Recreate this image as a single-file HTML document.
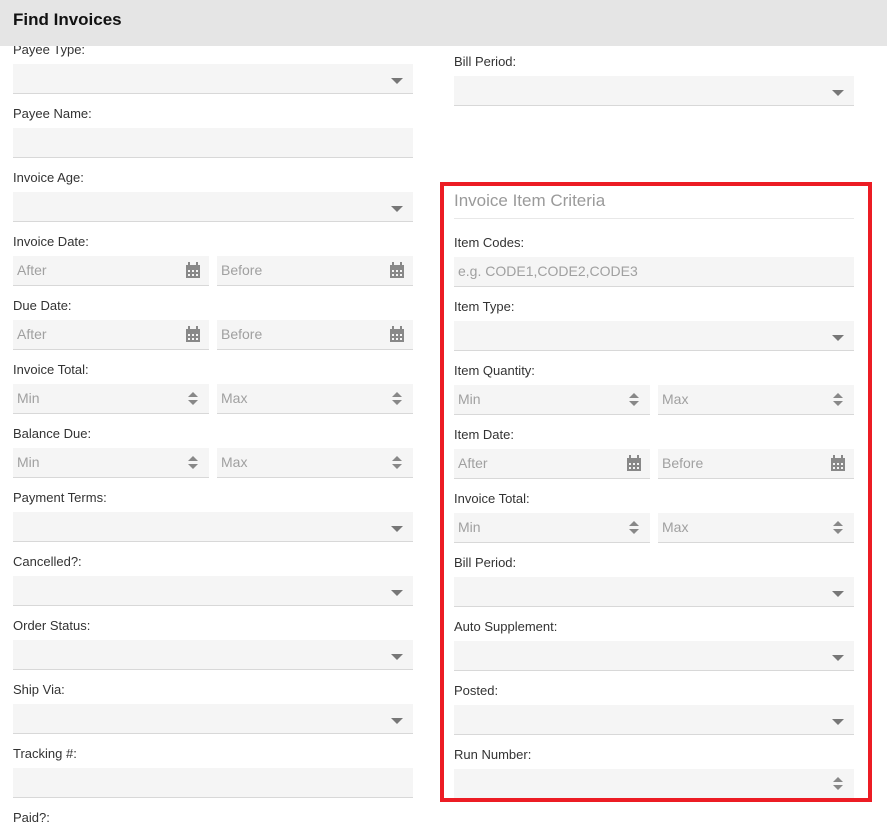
<!DOCTYPE html><html><head><meta charset="utf-8"><style>
*{margin:0;padding:0;box-sizing:border-box}
body{width:887px;height:830px;background:#fff;font-family:"Liberation Sans",Arial,sans-serif;position:relative;overflow:hidden}
.hd{position:absolute;left:0;top:0;width:887px;height:46px;background:#e5e5e5;z-index:2}
.hd span{position:absolute;left:13px;top:10px;font-size:17px;font-weight:bold;color:#111}
.l{position:absolute;font-size:13px;color:#333;line-height:16px}
.i{position:absolute;height:30px;background:#f5f5f5;border-bottom:1px solid #d8d8d8;font-size:14px;color:#a0a0a0;line-height:29px;padding-left:4px}
.dd::after{content:"";position:absolute;right:10px;top:14px;border-left:6px solid transparent;border-right:6px solid transparent;border-top:6px solid #777}
.sp::before{content:"";position:absolute;right:11px;top:8px;border-left:5px solid transparent;border-right:5px solid transparent;border-bottom:5px solid #888}
.sp::after{content:"";position:absolute;right:11px;top:16px;border-left:5px solid transparent;border-right:5px solid transparent;border-top:5px solid #888}
.cal{position:absolute;right:9px;top:9px;width:14px;height:13px;background:#888;border-top:3px solid #888}
.cal::before{content:"";position:absolute;left:2px;top:2px;width:2px;height:2px;background:#f5f5f5;box-shadow:4px 0 #f5f5f5,8px 0 #f5f5f5,0 4px #f5f5f5,4px 4px #f5f5f5,8px 4px #f5f5f5}
.cal::after{content:"";position:absolute;left:2px;top:-6px;width:2px;height:4px;background:#888;box-shadow:8px 0 #888}
.box{position:absolute;left:440px;top:182px;width:432px;height:620px;border:4px solid #ec1c24;z-index:3}
</style></head><body>
<div class="hd"><span>Find Invoices</span></div>

<div class="l" style="left:13px;top:42px">Payee Type:</div><div class="i dd" style="left:13px;top:64px;width:400px"></div>
<div class="l" style="left:13px;top:106px">Payee Name:</div><div class="i" style="left:13px;top:128px;width:400px"></div>
<div class="l" style="left:13px;top:170px">Invoice Age:</div><div class="i dd" style="left:13px;top:192px;width:400px"></div>
<div class="l" style="left:13px;top:234px">Invoice Date:</div><div class="i" style="left:13px;top:256px;width:196px">After<div class="cal"></div></div><div class="i" style="left:217px;top:256px;width:196px">Before<div class="cal"></div></div>
<div class="l" style="left:13px;top:298px">Due Date:</div><div class="i" style="left:13px;top:320px;width:196px">After<div class="cal"></div></div><div class="i" style="left:217px;top:320px;width:196px">Before<div class="cal"></div></div>
<div class="l" style="left:13px;top:362px">Invoice Total:</div><div class="i sp" style="left:13px;top:384px;width:196px">Min</div><div class="i sp" style="left:217px;top:384px;width:196px">Max</div>
<div class="l" style="left:13px;top:426px">Balance Due:</div><div class="i sp" style="left:13px;top:448px;width:196px">Min</div><div class="i sp" style="left:217px;top:448px;width:196px">Max</div>
<div class="l" style="left:13px;top:490px">Payment Terms:</div><div class="i dd" style="left:13px;top:512px;width:400px"></div>
<div class="l" style="left:13px;top:554px">Cancelled?:</div><div class="i dd" style="left:13px;top:576px;width:400px"></div>
<div class="l" style="left:13px;top:618px">Order Status:</div><div class="i dd" style="left:13px;top:640px;width:400px"></div>
<div class="l" style="left:13px;top:682px">Ship Via:</div><div class="i dd" style="left:13px;top:704px;width:400px"></div>
<div class="l" style="left:13px;top:746px">Tracking #:</div><div class="i" style="left:13px;top:768px;width:400px"></div>
<div class="l" style="left:13px;top:810px">Paid?:</div>

<div class="l" style="left:454px;top:54px">Bill Period:</div><div class="i dd" style="left:454px;top:76px;width:400px"></div>

<div style="position:absolute;left:454px;top:191px;font-size:17px;color:#9a9a9a">Invoice Item Criteria</div>
<div style="position:absolute;left:454px;top:218px;width:400px;height:1px;background:#e8e8e8"></div>
<div class="l" style="left:454px;top:235px">Item Codes:</div><div class="i" style="left:454px;top:257px;width:400px">e.g. CODE1,CODE2,CODE3</div>
<div class="l" style="left:454px;top:299px">Item Type:</div><div class="i dd" style="left:454px;top:321px;width:400px"></div>
<div class="l" style="left:454px;top:363px">Item Quantity:</div><div class="i sp" style="left:454px;top:385px;width:196px">Min</div><div class="i sp" style="left:658px;top:385px;width:196px">Max</div>
<div class="l" style="left:454px;top:427px">Item Date:</div><div class="i" style="left:454px;top:449px;width:196px">After<div class="cal"></div></div><div class="i" style="left:658px;top:449px;width:196px">Before<div class="cal"></div></div>
<div class="l" style="left:454px;top:491px">Invoice Total:</div><div class="i sp" style="left:454px;top:513px;width:196px">Min</div><div class="i sp" style="left:658px;top:513px;width:196px">Max</div>
<div class="l" style="left:454px;top:555px">Bill Period:</div><div class="i dd" style="left:454px;top:577px;width:400px"></div>
<div class="l" style="left:454px;top:619px">Auto Supplement:</div><div class="i dd" style="left:454px;top:641px;width:400px"></div>
<div class="l" style="left:454px;top:683px">Posted:</div><div class="i dd" style="left:454px;top:705px;width:400px"></div>
<div class="l" style="left:454px;top:747px">Run Number:</div><div class="i sp" style="left:454px;top:769px;width:400px"></div>
<div class="box"></div>
</body></html>
